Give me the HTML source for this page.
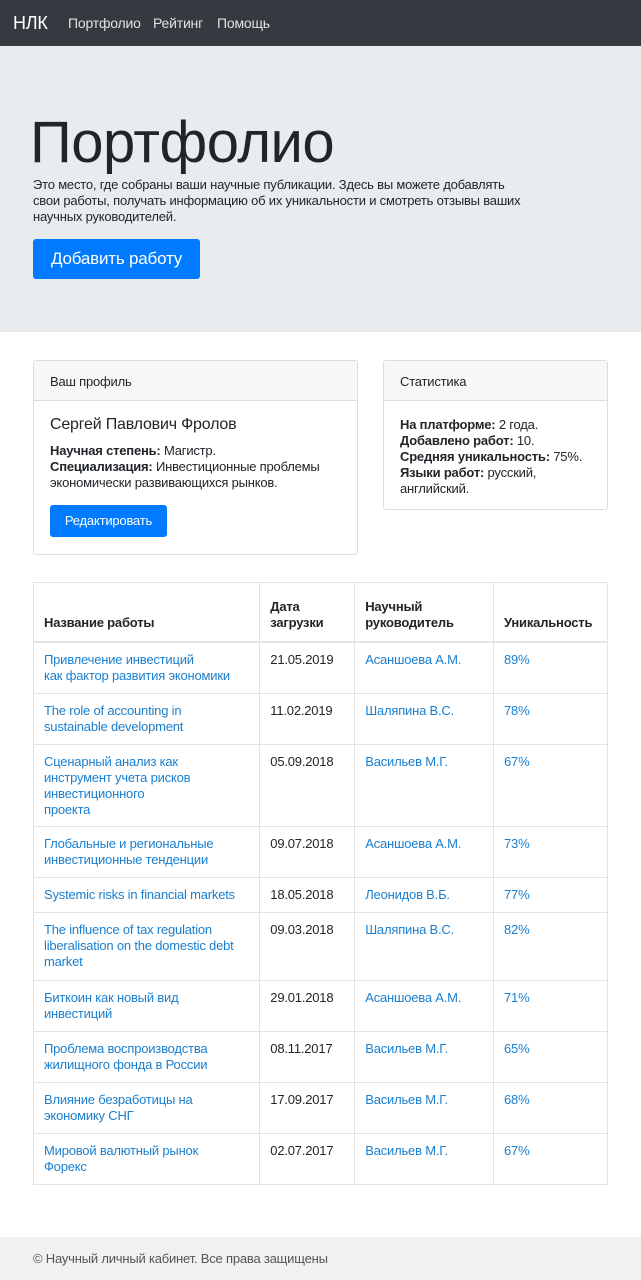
<!DOCTYPE html>
<html><head><meta charset="utf-8"><style>
*{box-sizing:border-box;margin:0;padding:0}
body{width:641px;height:1280px;font-family:"Liberation Sans",sans-serif;color:#212529;background:#fff;position:relative;overflow:hidden;font-size:13px;letter-spacing:-0.2px}
.nav{position:absolute;left:0;top:0;width:641px;height:46px;background:#343a40;color:#fff}
.nav span{position:absolute;top:15px;font-size:14px;color:rgba(255,255,255,.85)}
.jumbo{position:absolute;left:0;top:46px;width:641px;height:286px;background:#e9ecef}
h1{position:absolute;left:30px;top:108px;font-size:58px;font-weight:300;color:#212529;letter-spacing:-0.5px;line-height:70px}
.lead{position:absolute;left:33px;top:177px;line-height:16px;width:560px}
.btn{position:absolute;left:33px;top:239px;width:167px;height:40px;background:#007bff;color:#fff;border-radius:3px;font-size:17px;text-align:center;line-height:40px}
.card{position:absolute;border:1px solid #ddd;border-radius:3px;background:#fff}
.ch{height:40px;background:#f7f7f7;border-bottom:1px solid #ddd;padding:13px 16px;font-size:13px}
.cb{padding:0 16px;line-height:16px}
.link{color:#1a7fcf}
table{position:absolute;left:33px;top:582px;width:575px;border-collapse:collapse}
td,th{border:1px solid #e3e3e3;padding:9px 10px;vertical-align:top;line-height:16px;text-align:left}
th{vertical-align:bottom;font-weight:bold;border-bottom:2px solid #e3e3e3;height:59px;padding-bottom:10px}
.foot{position:absolute;left:0;top:1237px;width:641px;height:43px;background:#f1f1f1;color:#555;padding:14px 33px}
</style></head><body>
<div class="nav"><span style="left:13px;top:13px;font-size:18px;color:#fff">НЛК</span><span style="left:68px">Портфолио</span><span style="left:153px">Рейтинг</span><span style="left:217px">Помощь</span></div>
<div class="jumbo"></div>
<h1>Портфолио</h1>
<div class="lead">Это место, где собраны ваши научные публикации. Здесь вы можете добавлять<br>свои работы, получать информацию об их уникальности и смотреть отзывы ваших<br>научных руководителей.</div>
<div class="btn">Добавить работу</div>
<div class="card" style="left:33px;top:360px;width:325px;height:195px">
<div class="ch">Ваш профиль</div>
<div class="cb"><div style="font-size:16px;margin:16px 0 10px">Сергей Павлович Фролов</div>
<b>Научная степень:</b> Магистр.<br><b>Специализация:</b> Инвестиционные проблемы экономически развивающихся рынков.
<div style="margin-top:14px;width:117px;height:32px;background:#007bff;color:#fff;border-radius:3px;text-align:center;line-height:32px">Редактировать</div></div></div>
<div class="card" style="left:383px;top:360px;width:225px;height:150px">
<div class="ch">Статистика</div>
<div class="cb" style="padding-top:16px"><b>На платформе:</b> 2 года.<br><b>Добавлено работ:</b> 10.<br><b>Средняя уникальность:</b> 75%.<br><b>Языки работ:</b> русский, английский.</div></div>
<table>
<colgroup><col style="width:227px"><col style="width:95px"><col style="width:139px"><col style="width:114px"></colgroup>
<tr><th>Название работы</th><th>Дата<br>загрузки</th><th>Научный<br>руководитель</th><th>Уникальность</th></tr>
<tr style="height:51px"><td class="link">Привлечение инвестиций<br>как фактор развития экономики</td><td>21.05.2019</td><td class="link">Асаншоева А.М.</td><td class="link">89%</td></tr>
<tr style="height:51px"><td class="link">The role of accounting in<br>sustainable development</td><td>11.02.2019</td><td class="link">Шаляпина В.С.</td><td class="link">78%</td></tr>
<tr style="height:82px"><td class="link" style="padding-bottom:8px">Сценарный анализ как<br>инструмент учета рисков<br>инвестиционного<br>проекта</td><td>05.09.2018</td><td class="link">Васильев М.Г.</td><td class="link">67%</td></tr>
<tr style="height:51px"><td class="link">Глобальные и региональные<br>инвестиционные тенденции</td><td>09.07.2018</td><td class="link">Асаншоева А.М.</td><td class="link">73%</td></tr>
<tr style="height:35px"><td class="link">Systemic risks in financial markets</td><td>18.05.2018</td><td class="link">Леонидов В.Б.</td><td class="link">77%</td></tr>
<tr style="height:68px"><td class="link">The influence of tax regulation<br>liberalisation on the domestic debt<br>market</td><td>09.03.2018</td><td class="link">Шаляпина В.С.</td><td class="link">82%</td></tr>
<tr style="height:51px"><td class="link">Биткоин как новый вид<br>инвестиций</td><td>29.01.2018</td><td class="link">Асаншоева А.М.</td><td class="link">71%</td></tr>
<tr style="height:51px"><td class="link">Проблема воспроизводства<br>жилищного фонда в России</td><td>08.11.2017</td><td class="link">Васильев М.Г.</td><td class="link">65%</td></tr>
<tr style="height:51px"><td class="link">Влияние безработицы на<br>экономику СНГ</td><td>17.09.2017</td><td class="link">Васильев М.Г.</td><td class="link">68%</td></tr>
<tr style="height:51px"><td class="link">Мировой валютный рынок<br>Форекс</td><td>02.07.2017</td><td class="link">Васильев М.Г.</td><td class="link">67%</td></tr>
</table>
<div class="foot">© Научный личный кабинет. Все права защищены</div>
</body></html>
